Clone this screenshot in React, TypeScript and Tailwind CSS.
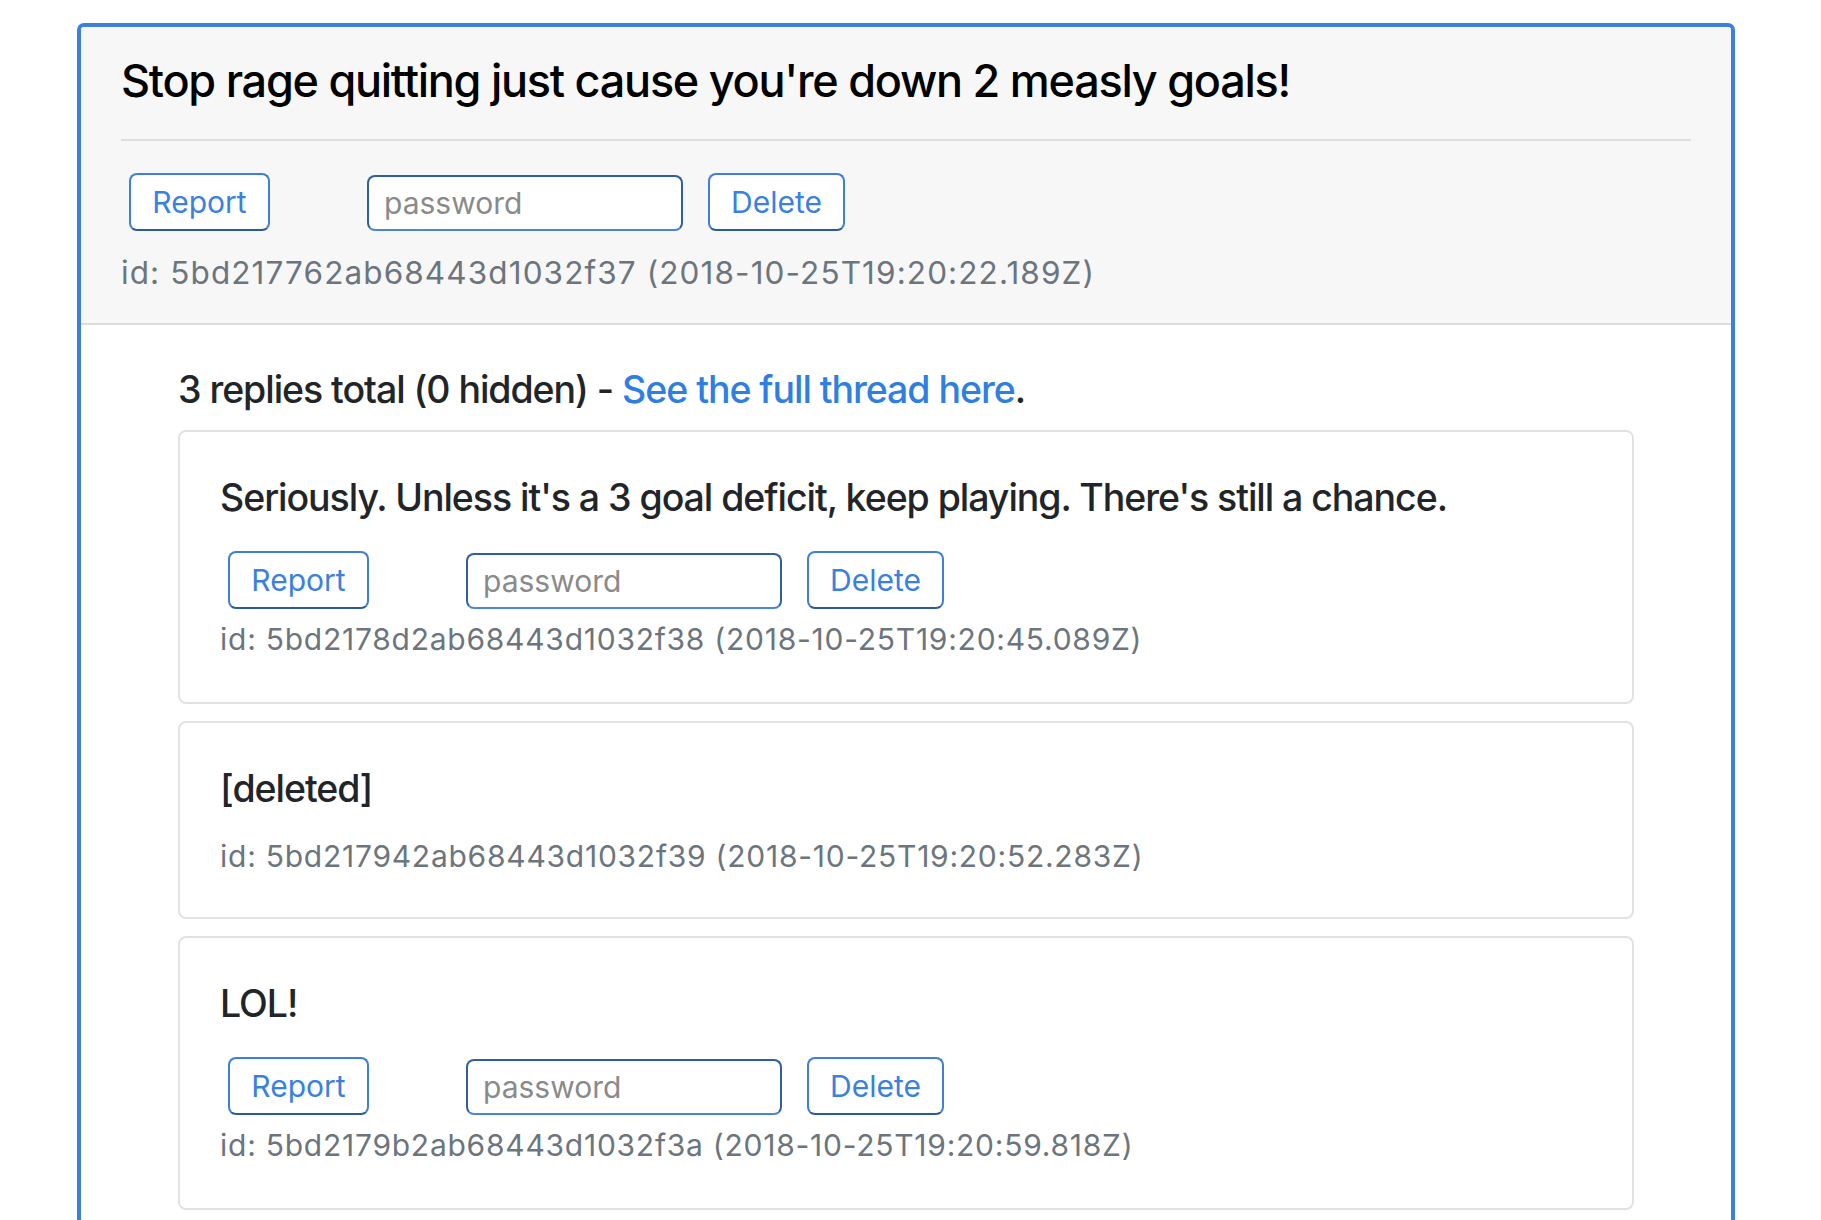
import React from 'react';

type Reply = {
  id: string;
  createdAt: string;
  text: string;
  deleted?: boolean;
};

const thread = {
  id: '5bd217762ab68443d1032f37',
  createdAt: '2018-10-25T19:20:22.189Z',
  text: "Stop rage quitting just cause you're down 2 measly goals!",
};

const replies: Reply[] = [
  {
    id: '5bd2178d2ab68443d1032f38',
    createdAt: '2018-10-25T19:20:45.089Z',
    text: "Seriously. Unless it's a 3 goal deficit, keep playing. There's still a chance.",
  },
  { id: '5bd217942ab68443d1032f39', createdAt: '2018-10-25T19:20:52.283Z', text: '[deleted]', deleted: true },
  { id: '5bd2179b2ab68443d1032f3a', createdAt: '2018-10-25T19:20:59.818Z', text: 'LOL!' },
];

const ActionRow = () => (
  <div className="flex items-start">
    <button className="ml-[8px] h-[58px] w-[141px] rounded-[8px] border-2 border-[#3d7fd9] border-b-[#2b5a98] bg-white text-[30px] text-[#3a80de]">
      Report
    </button>
    <input
      type="password"
      placeholder="password"
      className="ml-[97px] mt-[2px] h-[56px] w-[316px] rounded-[8px] border-2 border-[#2f5f9f] border-b-[#4a86d6] bg-white pl-[15px] text-[30px] text-[#333] outline-none placeholder:text-[#8a8a8a]"
    />
    <button className="ml-[25px] h-[58px] w-[137px] rounded-[8px] border-2 border-[#3d7fd9] border-b-[#2b5a98] bg-white text-[30px] text-[#3a80de]">
      Delete
    </button>
  </div>
);

const ReplyCard = ({ reply }: { reply: Reply }) => (
  <div
    className={`rounded-[8px] border-2 border-[#e2e2e2] bg-white px-[40px] pt-[43px] ${
      reply.deleted ? 'pb-[38px]' : 'pb-[40px]'
    }`}
  >
    <h5 className="mb-[23px] text-[37.5px] font-medium leading-[45px] tracking-[-0.028em] text-[#212529]">
      {reply.text}
    </h5>
    {!reply.deleted && (
      <div className="mt-[31px] mb-[8px]">
        <ActionRow />
      </div>
    )}
    <p className="text-[30px] leading-[45px] tracking-[0.025em] text-[#6c757d]">
      id: {reply.id} ({reply.createdAt})
    </p>
  </div>
);

export default function App() {
  return (
    <div className="min-h-screen bg-white pt-[23px] pl-[77px] font-['Inter','Noto_Sans',sans-serif]">
      <div className="w-[1658px] overflow-hidden rounded-t-[7px] border-4 border-b-0 border-[#3c7fdc]">
        <div className="border-b-2 border-[#dcdcdc] bg-[#f7f7f7] px-[40px] pt-[27px] pb-[28px]">
          <h4 className="text-[45px] font-medium leading-[54px] tracking-[-0.028em] text-black">{thread.text}</h4>
          <hr className="mt-[31px] border-t-2 border-[#dedede]" />
          <div className="mt-[32px]">
            <ActionRow />
          </div>
          <p className="mt-[19px] text-[31.5px] leading-[45px] tracking-[0.035em] text-[#6c757d]">
            id: {thread.id} ({thread.createdAt})
          </p>
        </div>
        <div className="px-[97px] pt-[42px] pb-[40px]">
          <p className="mb-[18px] text-[37.5px] font-medium leading-[45px] tracking-[-0.028em] text-[#212529]">
            3 replies total (0 hidden) - <a className="text-[#2f7fe2]">See the full thread here</a>.
          </p>
          <div className="flex flex-col gap-[17px]">
            {replies.map((r) => (
              <ReplyCard key={r.id} reply={r} />
            ))}
          </div>
        </div>
      </div>
    </div>
  );
}
